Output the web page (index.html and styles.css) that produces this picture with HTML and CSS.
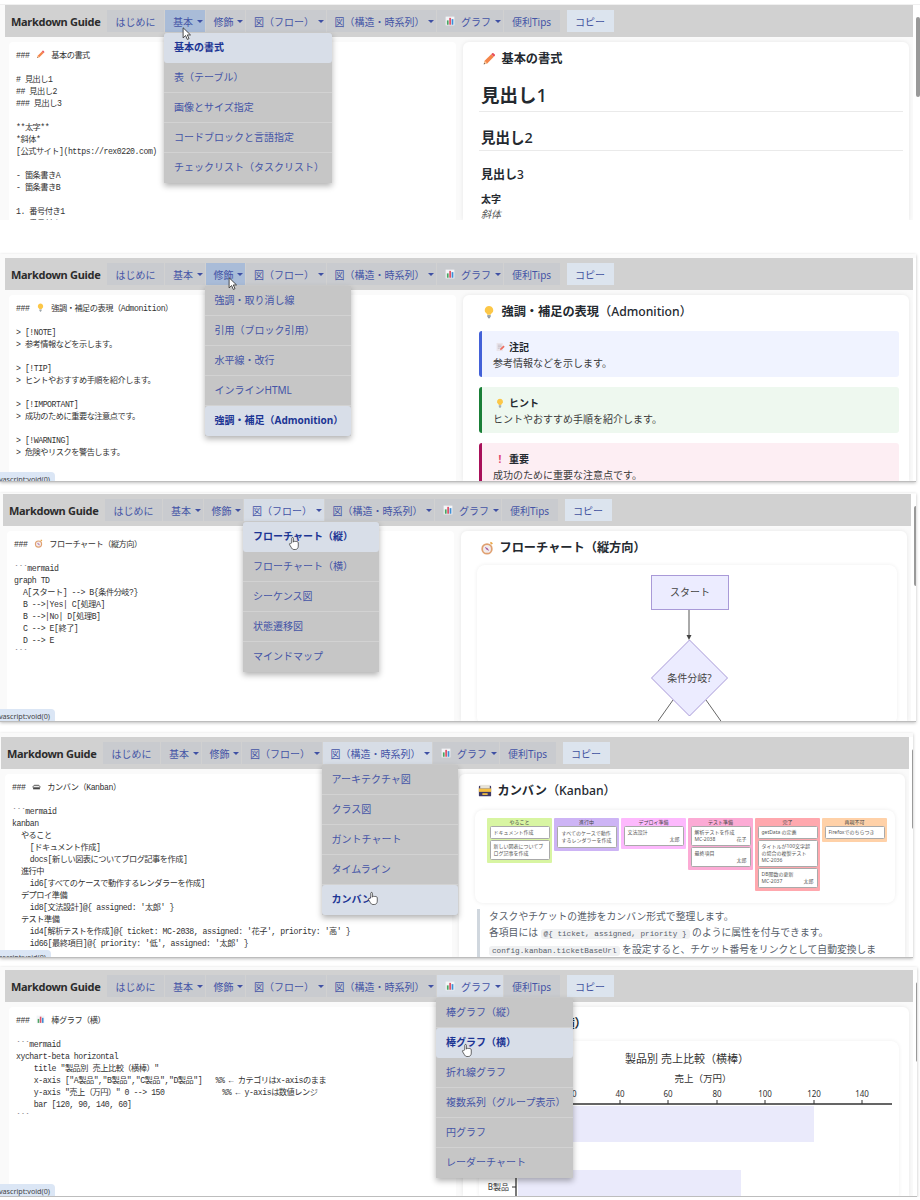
FILE: index.html
```html
<!DOCTYPE html>
<html lang="ja">
<head>
<meta charset="utf-8">
<title>Markdown Guide</title>
<link rel="stylesheet" href="styles.css">
</head>
<body>

<!-- icons shared by all five captures -->
<svg class="sprite" xmlns="http://www.w3.org/2000/svg">
  <symbol id="i-pencil" viewBox="0 0 16 16">
    <path d="M2 14l1-4 7.5-7.5 3 3L6 13z" fill="#f4854a"/>
    <path d="M10.5 2.5l1.2-1.2c.4-.4 1-.4 1.400 0l1.600 1.600c.4.4.4 1 0 1.400L13.500 5.500z" fill="#e8505b"/>
    <path d="M2 14l1-4 3 3z" fill="#f7cfa5"/>
    <path d="M2 14l.4-1.600 1.200 1.200z" fill="#444"/>
  </symbol>
  <symbol id="i-bulb" viewBox="0 0 16 16">
    <path d="M8 1a4.800 4.800 0 0 0-2.800 8.700c.5.400.8 1 .8 1.500h4c0-.5.3-1.100.8-1.500A4.800 4.800 0 0 0 8 1z" fill="#fcc747"/>
    <rect x="6" y="11.500" width="4" height="2.500" rx=".6" fill="#9aa5ad"/>
    <rect x="6.800" y="14" width="2.400" height="1.200" rx=".5" fill="#6d7780"/>
  </symbol>
  <symbol id="i-compass" viewBox="0 0 16 16">
    <circle cx="8" cy="9" r="6.500" fill="#e0a070"/>
    <circle cx="8" cy="9" r="4.500" fill="#f2ecec"/>
    <path d="M5.500 6.500l3.500 2 1.500 3-3.500-2z" fill="#a65ca0"/>
    <rect x="11.500" y="1.500" width="3" height="2" rx=".5" fill="#e8a84a" transform="rotate(40 13 2.500)"/>
  </symbol>
  <symbol id="i-box" viewBox="0 0 16 16">
    <rect x="1" y="2" width="14" height="12" rx="1" fill="#3f3a66"/>
    <rect x="1" y="5" width="14" height="4" fill="#f5c044"/>
    <rect x="2.500" y="1" width="11" height="4" fill="#e7e3d8"/>
    <rect x="5" y="10.500" width="6" height="2" fill="#f5c044"/>
  </symbol>
  <symbol id="i-boxsmall" viewBox="0 0 16 16">
    <path d="M1 8l3-3h8l3 3v2H1z" fill="#777"/>
    <path d="M3 8h10" stroke="#fff" stroke-width="1.500"/>
    <rect x="2" y="10" width="12" height="3" fill="#444"/>
  </symbol>
  <symbol id="i-chart" viewBox="0 0 16 16">
    <rect x="1" y="1" width="14" height="14" fill="#f3f5f7"/>
    <rect x="3" y="7" width="2.800" height="7" fill="#4aa564"/>
    <rect x="6.800" y="3" width="2.800" height="11" fill="#e0526a"/>
    <rect x="10.600" y="5" width="2.800" height="9" fill="#3f8fd6"/>
  </symbol>
  <symbol id="i-memo" viewBox="0 0 16 16">
    <rect x="2.500" y="1.500" width="10" height="13" fill="#e9e4ea"/>
    <path d="M4.500 5h6M4.500 7.500h6M4.500 10h3" stroke="#b5aeb8"/>
    <path d="M8 13l1-3 4.500-4.500 2 2L11 12z" fill="#ee6d5f"/>
  </symbol>
  <symbol id="i-arrow" viewBox="0 0 12 18">
    <path d="M1 1v13l3.200-3 2.200 5 2.200-1-2.200-4.800H10.500z" fill="#fff" stroke="#222" stroke-width="1"/>
  </symbol>
  <symbol id="i-hand" viewBox="0 0 16 20">
    <path d="M5 9V3c0-1.500 2.200-1.500 2.200 0v5l.8-.3c.2-1 1.900-1 2 0 .3-.8 1.800-.7 2 .3.500-.4 1.700-.2 1.700 1v4.500c0 2.500-1.500 4.500-4 4.500H8c-1.800 0-2.700-1-3.500-2.500L2 11.500c-.7-1.300.8-2.200 1.700-1.200z" fill="#fff" stroke="#222" stroke-width=".9"/>
  </symbol>
</svg>

<!-- 1: 基本 -->
<section class="shot shot-1">
  <div class="main">
    <nav class="nav">
      <span class="brand">Markdown Guide</span>
      <a class="item">はじめに</a>
      <div class="item drop hover">基本
        <ul class="menu">
          <li class="on">基本の書式</li>
          <li>表（テーブル）</li>
          <li>画像とサイズ指定</li>
          <li>コードブロックと言語指定</li>
          <li>チェックリスト（タスクリスト）</li>
        </ul>
      </div>
      <div class="item drop">修飾</div>
      <div class="item drop">図（フロー）</div>
      <div class="item drop">図（構造・時系列）</div>
      <div class="item drop"><svg class="ico-nav"><use href="#i-chart"/></svg>グラフ</div>
      <a class="item">便利Tips</a>
      <a class="copy">コピー</a>
    </nav>
    <div class="work">
      <pre class="editor">### <svg class="ico-ed"><use href="#i-pencil"/></svg> 基本の書式

# 見出し1
## 見出し2
### 見出し3

**太字**
*斜体*
[公式サイト](https://rex0220.com)

- 箇条書きA
- 箇条書きB

1. 番号付き1
2. 番号付き2</pre>
      <div class="preview">
        <h3 class="title"><svg class="ico-title"><use href="#i-pencil"/></svg>基本の書式</h3>
        <h1 class="h1">見出し<span class="lat">1</span></h1>
        <h2 class="h2">見出し<span class="lat">2</span></h2>
        <h3 class="h3">見出し<span class="lat">3</span></h3>
        <p class="para"><b>太字</b><br><i>斜体</i></p>
      </div>
    </div>
  </div>
  <div class="scroll"><div class="thumb"></div></div>
  <svg class="cursor cur-1"><use href="#i-arrow"/></svg>
</section>

<!-- 2: 修飾 -->
<section class="shot shot-2">
  <div class="main">
    <nav class="nav">
      <span class="brand">Markdown Guide</span>
      <a class="item">はじめに</a>
      <div class="item drop">基本</div>
      <div class="item drop hover">修飾
        <ul class="menu">
          <li>強調・取り消し線</li>
          <li>引用（ブロック引用）</li>
          <li>水平線・改行</li>
          <li>インラインHTML</li>
          <li class="on">強調・補足（Admonition）</li>
        </ul>
      </div>
      <div class="item drop">図（フロー）</div>
      <div class="item drop">図（構造・時系列）</div>
      <div class="item drop"><svg class="ico-nav"><use href="#i-chart"/></svg>グラフ</div>
      <a class="item">便利Tips</a>
      <a class="copy">コピー</a>
    </nav>
    <div class="work">
      <pre class="editor">### <svg class="ico-ed"><use href="#i-bulb"/></svg> 強調・補足の表現（Admonition）

&gt; [!NOTE]
&gt; 参考情報などを示します。

&gt; [!TIP]
&gt; ヒントやおすすめ手順を紹介します。

&gt; [!IMPORTANT]
&gt; 成功のために重要な注意点です。

&gt; [!WARNING]
&gt; 危険やリスクを警告します。</pre>
      <div class="preview">
        <h3 class="title"><svg class="ico-title"><use href="#i-bulb"/></svg>強調・補足の表現<span class="lat">（Admonition）</span></h3>
        <div class="note">
          <p class="note-head"><svg class="ico-note"><use href="#i-memo"/></svg>注記</p>
          <p>参考情報などを示します。</p>
        </div>
        <div class="note tip">
          <p class="note-head"><svg class="ico-note"><use href="#i-bulb"/></svg>ヒント</p>
          <p>ヒントやおすすめ手順を紹介します。</p>
        </div>
        <div class="note imp">
          <p class="note-head"><span class="bang">!</span>重要</p>
          <p>成功のために重要な注意点です。</p>
        </div>
      </div>
    </div>
  </div>
  <div class="scroll"><div class="thumb"></div></div>
  <span class="status">javascript:void(0)</span>
  <svg class="cursor cur-2"><use href="#i-arrow"/></svg>
</section>

<!-- 3: 図（フロー） -->
<section class="shot shot-3">
  <div class="main">
    <nav class="nav">
      <span class="brand">Markdown Guide</span>
      <a class="item">はじめに</a>
      <div class="item drop">基本</div>
      <div class="item drop">修飾</div>
      <div class="item drop open">図（フロー）
        <ul class="menu">
          <li class="on">フローチャート（縦）</li>
          <li>フローチャート（横）</li>
          <li>シーケンス図</li>
          <li>状態遷移図</li>
          <li>マインドマップ</li>
        </ul>
      </div>
      <div class="item drop">図（構造・時系列）</div>
      <div class="item drop"><svg class="ico-nav"><use href="#i-chart"/></svg>グラフ</div>
      <a class="item">便利Tips</a>
      <a class="copy">コピー</a>
    </nav>
    <div class="work">
      <pre class="editor">### <svg class="ico-ed"><use href="#i-compass"/></svg> フローチャート（縦方向）

&#96;&#96;&#96;mermaid
graph TD
  A[スタート] --&gt; B{条件分岐?}
  B --&gt;|Yes| C[処理A]
  B --&gt;|No| D[処理B]
  C --&gt; E[終了]
  D --&gt; E
&#96;&#96;&#96;</pre>
      <div class="preview">
        <h3 class="title"><svg class="ico-title"><use href="#i-compass"/></svg>フローチャート（縦方向）</h3>
        <div class="figure">
          <svg class="flow" viewBox="0 0 420 160" xmlns="http://www.w3.org/2000/svg">
            <path d="M212 44v27" stroke="#555" fill="none"/>
            <path d="M209.500 70h5l-2.500 5z" fill="#444"/>
            <path d="M196 135l-17 24M229 135l17 24" stroke="#666" fill="none"/>
            <rect x="174.500" y="10.500" width="77" height="34" fill="#ececff" stroke="#a99ad8"/>
            <text class="flow-text" x="213" y="31" text-anchor="middle">スタート</text>
            <path d="M212.500 75l38 38-38 38-38-38z" fill="#ececff" stroke="#a99ad8"/>
            <text class="flow-text" x="212.500" y="117" text-anchor="middle">条件分岐?</text>
          </svg>
        </div>
      </div>
    </div>
  </div>
  <div class="scroll"><div class="thumb"></div></div>
  <span class="status">javascript:void(0)</span>
  <svg class="cursor cur-3"><use href="#i-hand"/></svg>
</section>

<!-- 4: 図（構造・時系列） -->
<section class="shot shot-4">
  <div class="main">
    <nav class="nav">
      <span class="brand">Markdown Guide</span>
      <a class="item">はじめに</a>
      <div class="item drop">基本</div>
      <div class="item drop">修飾</div>
      <div class="item drop">図（フロー）</div>
      <div class="item drop open">図（構造・時系列）
        <ul class="menu">
          <li>アーキテクチャ図</li>
          <li>クラス図</li>
          <li>ガントチャート</li>
          <li>タイムライン</li>
          <li class="on">カンバン</li>
        </ul>
      </div>
      <div class="item drop"><svg class="ico-nav"><use href="#i-chart"/></svg>グラフ</div>
      <a class="item">便利Tips</a>
      <a class="copy">コピー</a>
    </nav>
    <div class="work">
      <pre class="editor">### <svg class="ico-ed"><use href="#i-boxsmall"/></svg> カンバン（Kanban）

&#96;&#96;&#96;mermaid
kanban
  やること
    [ドキュメント作成]
    docs[新しい図表についてブログ記事を作成]
  進行中
    id6[すべてのケースで動作するレンダラーを作成]
  デプロイ準備
    id8[文法設計]@{ assigned: '太郎' }
  テスト準備
    id4[解析テストを作成]@{ ticket: MC-2038, assigned: '花子', priority: '高' }
    id66[最終項目]@{ priority: '低', assigned: '太郎' }</pre>
      <div class="preview">
        <h3 class="title"><svg class="ico-title"><use href="#i-box"/></svg>カンバン<span class="lat">（Kanban）</span></h3>
        <div class="board">
          <div class="col c1">
            <h4>やること</h4>
            <div class="card">ドキュメント作成</div>
            <div class="card">新しい図表についてブログ記事を作成</div>
          </div>
          <div class="col c2">
            <h4>進行中</h4>
            <div class="card tall">すべてのケースで動作するレンダラーを作成</div>
          </div>
          <div class="col c3">
            <h4>デプロイ準備</h4>
            <div class="card">文法設計<div class="meta"><span></span><span>太郎</span></div></div>
          </div>
          <div class="col c4">
            <h4>テスト準備</h4>
            <div class="card">解析テストを作成<div class="meta"><span>MC-2038</span><span>花子</span></div></div>
            <div class="card">最終項目<div class="meta"><span></span><span>太郎</span></div></div>
          </div>
          <div class="col c5">
            <h4>完了</h4>
            <div class="card">getData の定義</div>
            <div class="card">タイトルが100文字超の場合の複製テスト<div class="meta"><span>MC-2036</span></div></div>
            <div class="card">DB関数の更新<div class="meta"><span>MC-2037</span><span>太郎</span></div></div>
          </div>
          <div class="col c6">
            <h4>再現不可</h4>
            <div class="card">Firefoxでのちらつき</div>
          </div>
        </div>
        <blockquote class="quote">
          タスクやチケットの進捗をカンバン形式で整理します。<br>
          各項目には <code>@{ ticket, assigned, priority }</code> のように属性を付与できます。<br>
          <code>config.kanban.ticketBaseUrl</code> を設定すると、チケット番号をリンクとして自動変換します。
        </blockquote>
      </div>
    </div>
  </div>
  <div class="scroll"><div class="thumb"></div></div>
  <span class="status">javascript:void(0)</span>
  <svg class="cursor cur-4"><use href="#i-hand"/></svg>
</section>

<!-- 5: グラフ -->
<section class="shot shot-5">
  <div class="main">
    <nav class="nav">
      <span class="brand">Markdown Guide</span>
      <a class="item">はじめに</a>
      <div class="item drop">基本</div>
      <div class="item drop">修飾</div>
      <div class="item drop">図（フロー）</div>
      <div class="item drop">図（構造・時系列）</div>
      <div class="item drop open"><svg class="ico-nav"><use href="#i-chart"/></svg>グラフ
        <ul class="menu">
          <li>棒グラフ（縦）</li>
          <li class="on">棒グラフ（横）</li>
          <li>折れ線グラフ</li>
          <li>複数系列（グループ表示）</li>
          <li>円グラフ</li>
          <li>レーダーチャート</li>
        </ul>
      </div>
      <a class="item">便利Tips</a>
      <a class="copy">コピー</a>
    </nav>
    <div class="work">
      <pre class="editor">### <svg class="ico-ed"><use href="#i-chart"/></svg> 棒グラフ（横）

&#96;&#96;&#96;mermaid
xychart-beta horizontal
    title "製品別 売上比較（横棒）"
    x-axis ["A製品","B製品","C製品","D製品"]   %% ← カテゴリはx-axisのまま
    y-axis "売上（万円）" 0 --&gt; 150             %% ← y-axisは数値レンジ
    bar [120, 90, 140, 60]
&#96;&#96;&#96;</pre>
      <div class="preview">
        <h3 class="title"><svg class="ico-title"><use href="#i-chart"/></svg>棒グラフ（横）</h3>
        <div class="figure">
          <svg class="flow" viewBox="0 0 420 160" xmlns="http://www.w3.org/2000/svg">
            <text class="chart-title" x="208" y="22" text-anchor="middle">製品別 売上比較（横棒）</text>
            <text class="chart-axis" x="224" y="41" text-anchor="middle">売上（万円）</text>
            <rect x="39" y="65" width="296" height="36" fill="#eaeafb"/>
            <rect x="39" y="129" width="223" height="36" fill="#eaeafb"/>
            <path d="M37 63h376M37 63v100" stroke="#333" stroke-width="1.300" fill="none"/>
            <path d="M93 59v4M141 59v4M189 59v4M238 59v4M286 59v4M335 59v4M383 59v4M33 146h4" stroke="#333" fill="none"/>
            <text class="chart-tick" x="93" y="56" text-anchor="middle">20</text>
            <text class="chart-tick" x="141" y="56" text-anchor="middle">40</text>
            <text class="chart-tick" x="189" y="56" text-anchor="middle">60</text>
            <text class="chart-tick" x="238" y="56" text-anchor="middle">80</text>
            <text class="chart-tick" x="286" y="56" text-anchor="middle">100</text>
            <text class="chart-tick" x="335" y="56" text-anchor="middle">120</text>
            <text class="chart-tick" x="383" y="56" text-anchor="middle">140</text>
            <text class="chart-tick" x="30" y="149" text-anchor="end">B製品</text>
          </svg>
        </div>
      </div>
    </div>
  </div>
  <div class="scroll"><div class="thumb"></div></div>
  <span class="status">javascript:void(0)</span>
  <svg class="cursor cur-5"><use href="#i-hand"/></svg>
</section>

</body>
</html>
```

FILE: styles.css
```css
html, body { margin: 0; padding: 0; background: #fff; overflow: hidden; }

body {
	font-family: "Noto Sans", "Noto Sans CJK JP", sans-serif;
	font-size: 10px;
	color: #24292f;
}

.sprite { display: none; }

/* one capture */
.shot {
	position: relative;
	display: flex;
	overflow: hidden;
	box-sizing: border-box;
	background: #fafafa;
	border-bottom: 1px solid #bdbdbd;
	box-shadow: 0 1px 3px rgba(0,0,0,.25);
}
.shot-1 { height: 216px; margin-top: 4px;  padding: 0 0 0 5px; width: 921px; border-bottom: 0; box-shadow: none; border-top: 1px solid #f0f0f0; }
.shot-2 { height: 228px; margin-top: 34px; padding: 4px 0 0 5px; width: 916px; }
.shot-3 { height: 229px; margin-top: 11px; padding: 1px 0 0 3px; width: 916px; }
.shot-4 { height: 225px; margin-top: 11px; padding: 4px 0 0 1px; width: 913px; }
.shot-5 { height: 230px; margin-top: 9px;  padding: 3px 0 0 5px; width: 917px; }

.main { width: 908px; flex: none; display: flex; flex-direction: column; }

/* nav bar */
.nav {
	display: flex;
	align-items: center;
	gap: 1px;
	height: 32px;
	padding-left: 6px;
	background: #d1d1d1;
	flex: none;
	color: #4454a6;
	white-space: nowrap;
}
.brand {
	width: 88px;
	margin-right: 7px;
	font-size: 11px;
	letter-spacing: -.3px;
	font-weight: 700;
	color: #2c2c2c;
}
.item {
	position: relative;
	display: flex;
	align-items: center;
	height: 22px;
	padding: 0 8.500px;
	background: #c9cbcf;
}
.drop { padding: 0 2px 0 8px; }
.drop::after {
	content: "";
	margin-left: 3.500px;
	border-top: 3.500px solid #3f50a4;
	border-left: 3px solid transparent;
	border-right: 3px solid transparent;
}
.hover { background: #a9bcd8; }
.open { background: #d7dde6; }
.copy {
	display: flex;
	align-items: center;
	height: 22px;
	margin-left: 6px;
	padding: 0 8.500px;
	background: #dce4ee;
	color: #42529f;
}
.ico-nav { width: 10px; height: 10px; margin-right: 6px; }

/* dropdown */
.menu {
	position: absolute;
	top: 100%;
	left: -1px;
	z-index: 5;
	min-width: 136px;
	width: max-content;
	margin: 1px 0 0;
	padding: 0;
	list-style: none;
	background: #c6c6c6;
	box-shadow: 0 3px 6px rgba(0,0,0,.3);
}
.menu li {
	box-sizing: border-box;
	height: 30px;
	line-height: 29px;
	padding: 0 8px 0 10px;
	border-bottom: 1px solid #d2d2d2;
}
.menu li:last-child { border-bottom: 0; }
.menu .on {
	background: #d8dee8;
	border-radius: 3px;
	border-bottom: 0;
	font-weight: 700;
	color: #1c3594;
}

/* two panes */
.work {
	flex: 1;
	min-height: 0;
	display: grid;
	grid-template-columns: 447px 446px;
	gap: 7px;
	padding: 5px 4px 0;
}
.editor {
	margin: 0;
	padding: 8px 7px 6px;
	background: #fff;
	border-radius: 4px 4px 0 0;
	overflow: hidden;
	font-family: "Liberation Mono", "Noto Sans CJK JP", monospace;
	font-size: 8.200px;
	letter-spacing: -.47px;
	line-height: 12px;
	color: #333;
}
.ico-ed { width: 9px; height: 9px; vertical-align: -1px; margin: 0 2px; }

.preview {
	padding: 0 10px 0 16px;
	background: #fff;
	border-radius: 6px 6px 0 0;
	box-shadow: 0 0 4px rgba(0,0,0,.08);
	overflow: hidden;
}
.title {
	display: flex;
	align-items: center;
	margin: 0 0 10px 3px;
	padding-top: 8px;
	font-size: 12.200px;
	line-height: 18px;
	font-weight: 700;
	color: #24292f;
}
.lat { font-weight: 500; }
.ico-title { width: 14px; height: 14px; margin-right: 5.500px; flex: none; }

.h1 { margin: 13px -4px 0 0; padding: 0 0 2px 2px; border-bottom: 1px solid #eaeaea; font-size: 18.500px; line-height: 28px; font-weight: 700; }
.h2 { margin: 14px -4px 0 0; padding: 0 0 2px 2px; border-bottom: 1px solid #eaeaea; font-size: 14.500px; line-height: 22px; font-weight: 700; }
.h3 { margin: 15px 0 0; padding-left: 2px; font-size: 12px; line-height: 18px; font-weight: 700; }
.para { margin: 8px 0 0; padding-left: 2px; line-height: 15px; }
.para i { color: #555; }

/* admonition */
.note {
	margin-bottom: 10px;
	padding: 8px 10px 6px 11px;
	background: #f0f3ff;
	border-left: 3.500px solid #4361d8;
	border-radius: 3px;
	color: #3b3b3b;
	line-height: 16px;
}
.note p { margin: 0; }
.note-head { display: flex; align-items: center; padding-left: 2px; font-weight: 700; color: #24292f; }
.ico-note { width: 10px; height: 10px; margin-right: 4px; }
.tip { background: #eef8ef; border-left-color: #1a7f37; }
.imp { background: #fdeef3; border-left-color: #a8115a; }
.bang { width: 10px; margin-right: 4px; text-align: center; color: #e0436e; font-weight: 700; }

/* mermaid output */
.figure {
	background: #fff;
	border-radius: 8px;
	box-shadow: 0 0 4px rgba(0,0,0,.07);
	margin-top: -2px;
}
.flow { display: block; width: 420px; height: 160px; }
.flow-text { font-size: 10px; fill: #444; }
.chart-title { font-size: 11px; fill: #333; }
.chart-axis { font-size: 9.500px; fill: #333; }
.chart-tick { font-size: 8px; fill: #333; }

/* kanban */
.board {
	display: grid;
	grid-template-columns: repeat(6, 65px);
	gap: 2px;
	align-items: start;
	height: 93px;
	box-sizing: border-box;
	margin-top: 1px;
	padding: 8px 12px 0;
	background: #fff;
	border-radius: 8px;
	box-shadow: 0 0 4px rgba(0,0,0,.08);
	font-size: 5px;
	line-height: 7px;
	color: #555;
}
.col { padding: 0 2.500px 3px; border-radius: 1px; }
.col h4 { margin: 0; height: 8px; line-height: 8px; font-size: 5px; font-weight: 400; text-align: center; color: #444; }
.card { margin-bottom: 1px; padding: 2px 3px; background: #fff; border: 1px solid #aaa; border-radius: 1.500px; }
.card:last-child { margin-bottom: 0; }
.tall { padding: 3px 3px 3px 4px; }
.meta { display: flex; justify-content: space-between; }
.c1 { background: #d8f5a2; }
.c2 { background: #cdb4f5; }
.c3 { background: #fdb9fd; }
.c4 { background: #fcabd5; }
.c5 { background: #ffa8ae; }
.c6 { background: #ffd1a8; }

.quote {
	margin: 6px 11px 0 2px;
	padding-left: 9px;
	border-left: 3px solid #d0d7de;
	color: #57606a;
	font-size: 9.800px;
	line-height: 15.500px;
}
.quote code {
	padding: 1px 3px;
	background: #f0f1f2;
	border-radius: 3px;
	font-family: "Liberation Mono", monospace;
	font-size: 7.700px;
}

/* scrollbar */
.scroll { width: 8px; flex: none; background: #fff; }
.thumb { width: 4px; height: 80px; margin: 12px 0 0 3px; background: #999; border-radius: 2px; }
.shot-2 .thumb { display: none; }

/* browser status bubble */
.status {
	position: absolute;
	left: -7px;
	bottom: -3px;
	height: 15px;
	padding: 0 5px 0 0;
	line-height: 14px;
	background: #dbe6f5;
	border-radius: 0 4px 0 0;
	font-size: 7.200px;
	color: #444;
}
.shot-2 .status { bottom: -6px; }
.shot-4 .status { bottom: -8px; left: -11px; }

/* mouse pointers */
.cursor { position: absolute; z-index: 9; }
.cur-1 { left: 182px; top: 22px; width: 10px; height: 14px; }
.cur-2 { left: 228px; top: 23px; width: 10px; height: 14px; }
.cur-3 { left: 288px; top: 43px; width: 12px; height: 15px; }
.cur-4 { left: 367px; top: 158px; width: 12px; height: 15px; }
.cur-5 { left: 461px; top: 76px; width: 12px; height: 15px; }
```
